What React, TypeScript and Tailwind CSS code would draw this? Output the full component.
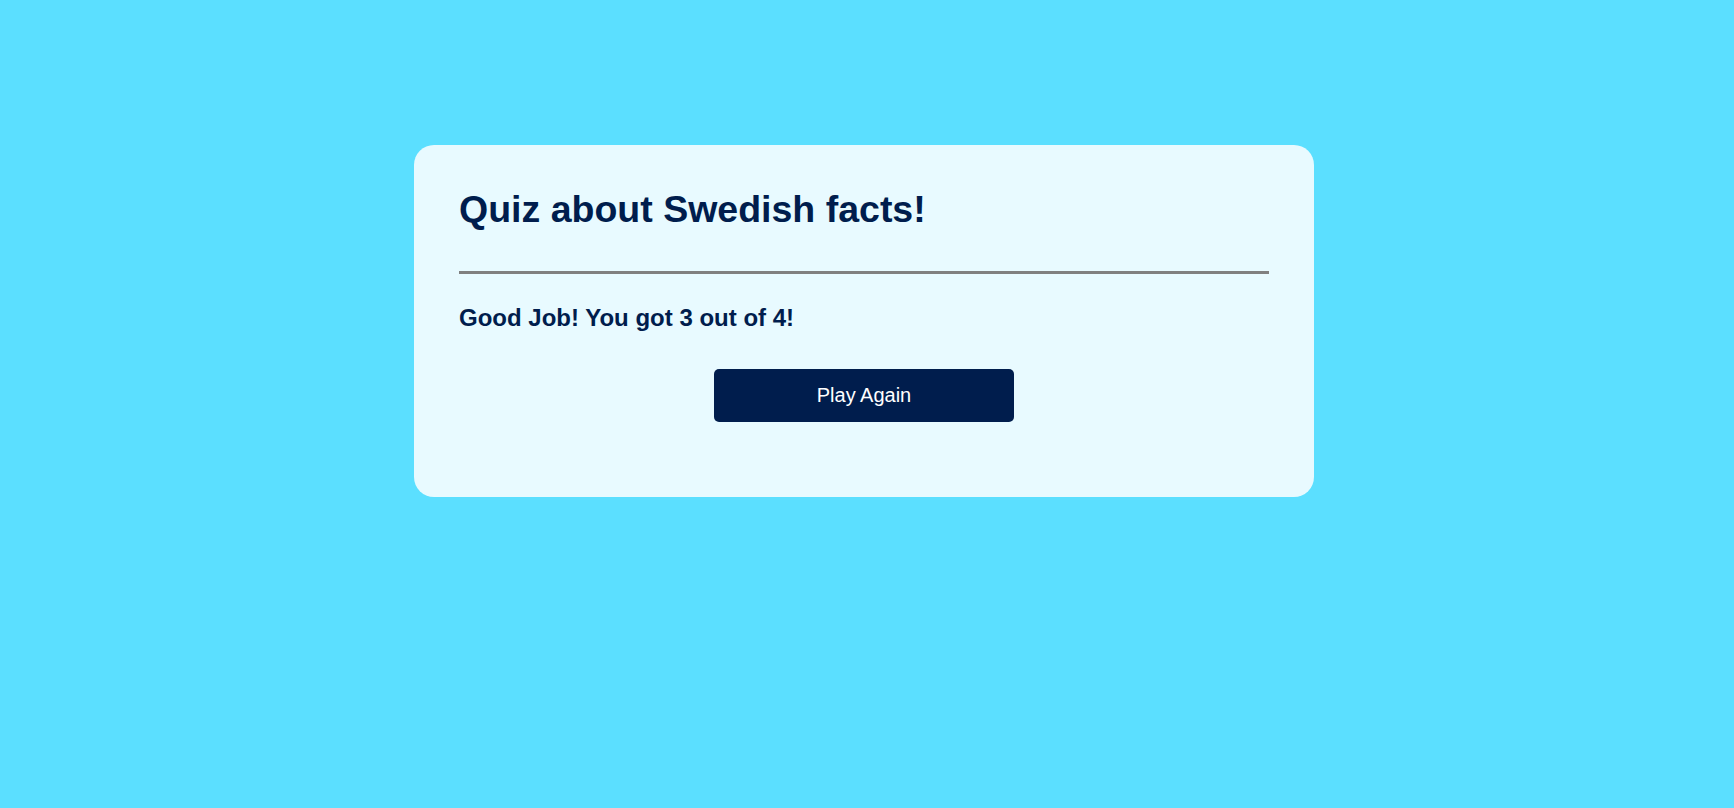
import React, { useState } from 'react';

const TOTAL = 4;

export default function App() {
  const [score] = useState(3);

  return (
    <div className="min-h-screen w-full bg-[#5bdfff] pt-[145px] pr-[6px] flex justify-center items-start font-['Liberation_Sans',Arial,sans-serif]">
      <div className="w-[900px] rounded-[20px] bg-[#e8faff] px-[45px] pt-[44px] pb-[75px] text-[#001d4d]">
        {/* Title */}
        <h1 className="text-[37.5px] font-bold leading-[1.1]">Quiz about Swedish facts!</h1>

        <div className="mt-[41px] h-[3px] w-full bg-[#808080]" />

        {/* Result */}
        <p className="mt-[30px] text-[24px] font-bold leading-[1.15]">
          Good Job! You got {score} out of {TOTAL}!
        </p>

        <div className="mt-[37px] flex justify-center">
          <button
            type="button"
            className="h-[53px] w-[300px] rounded-[5px] bg-[#001d4d] text-[20px] text-white"
          >
            Play Again
          </button>
        </div>
      </div>
    </div>
  );
}
